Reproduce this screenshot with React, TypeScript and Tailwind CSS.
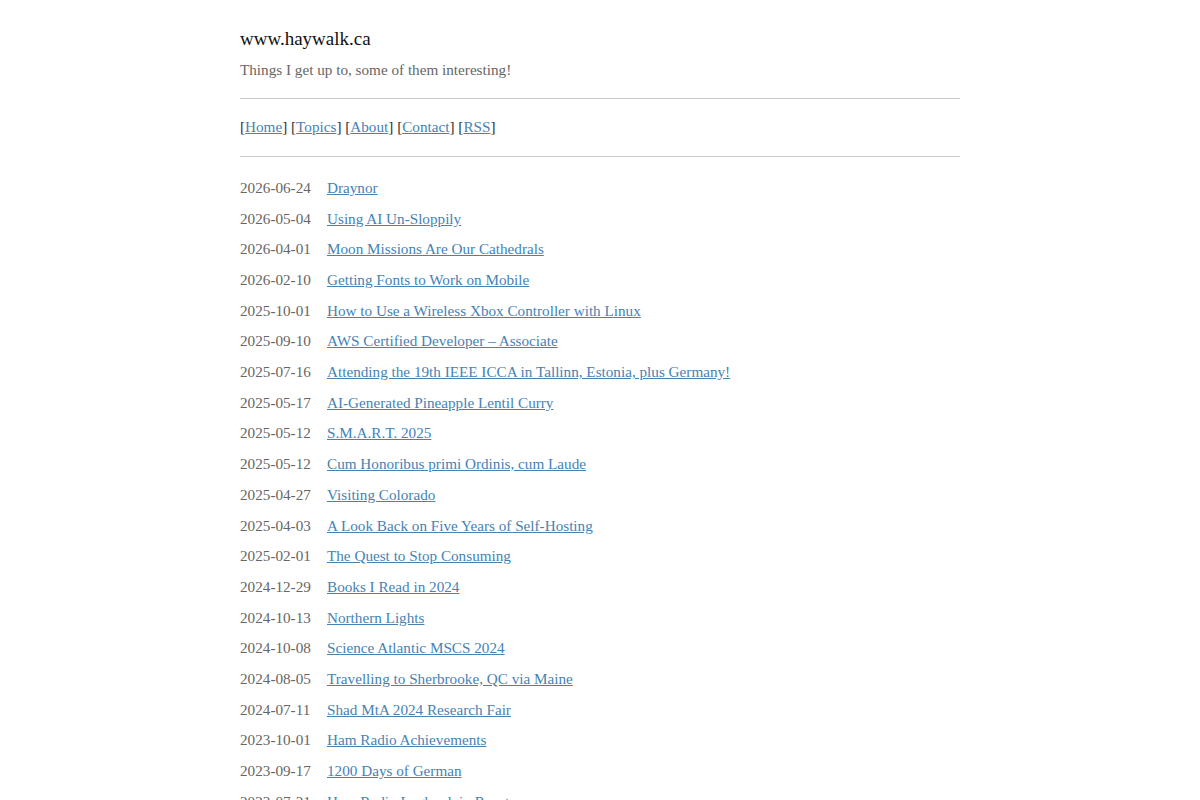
const posts: [string, string][] = [
  ["2026-06-24", "Draynor"],
  ["2026-05-04", "Using AI Un-Sloppily"],
  ["2026-04-01", "Moon Missions Are Our Cathedrals"],
  ["2026-02-10", "Getting Fonts to Work on Mobile"],
  ["2025-10-01", "How to Use a Wireless Xbox Controller with Linux"],
  ["2025-09-10", "AWS Certified Developer – Associate"],
  ["2025-07-16", "Attending the 19th IEEE ICCA in Tallinn, Estonia, plus Germany!"],
  ["2025-05-17", "AI-Generated Pineapple Lentil Curry"],
  ["2025-05-12", "S.M.A.R.T. 2025"],
  ["2025-05-12", "Cum Honoribus primi Ordinis, cum Laude"],
  ["2025-04-27", "Visiting Colorado"],
  ["2025-04-03", "A Look Back on Five Years of Self-Hosting"],
  ["2025-02-01", "The Quest to Stop Consuming"],
  ["2024-12-29", "Books I Read in 2024"],
  ["2024-10-13", "Northern Lights"],
  ["2024-10-08", "Science Atlantic MSCS 2024"],
  ["2024-08-05", "Travelling to Sherbrooke, QC via Maine"],
  ["2024-07-11", "Shad MtA 2024 Research Fair"],
  ["2023-10-01", "Ham Radio Achievements"],
  ["2023-09-17", "1200 Days of German"],
  ["2023-07-21", "Ham Radio Logbook in React"],
];

const nav = ["Home", "Topics", "About", "Contact", "RSS"];

export default function App() {
  return (
    <div className="min-h-screen bg-white font-['Liberation_Serif',_'Times_New_Roman',_serif] text-[#222]">
      <div className="mx-auto w-[720px] pt-[26px]">
        {/* Header */}
        <h1 className="text-[19px] leading-[26px] text-[#111]">www.haywalk.ca</h1>
        <p className="mt-[8px] text-[15.2px] leading-[20px] text-[#666]">
          Things I get up to, some of them interesting!
        </p>
        <hr className="mt-[18px] border-t border-[#ccc]" />

        {/* Nav */}
        <nav className="pt-[18px] pb-[19px] text-[15.2px] leading-[20px] text-[#333]">
          {nav.map((n, i) => (
            <span key={n}>
              [<a href="#" className="text-[#4682b4] underline">{n}</a>]
              {i < nav.length - 1 ? " " : ""}
            </span>
          ))}
        </nav>
        <hr className="border-t border-[#ccc]" />

        {/* Posts */}
        <ul className="pt-[16px] text-[15.2px]">
          {posts.map(([d, t], i) => (
            <li key={i} className="flex h-[30.7px] items-center">
              <span className="w-[87px] shrink-0 text-[#666]">{d}</span>
              <a href="#" className="text-[#4682b4] underline">{t}</a>
            </li>
          ))}
        </ul>
      </div>
    </div>
  );
}
